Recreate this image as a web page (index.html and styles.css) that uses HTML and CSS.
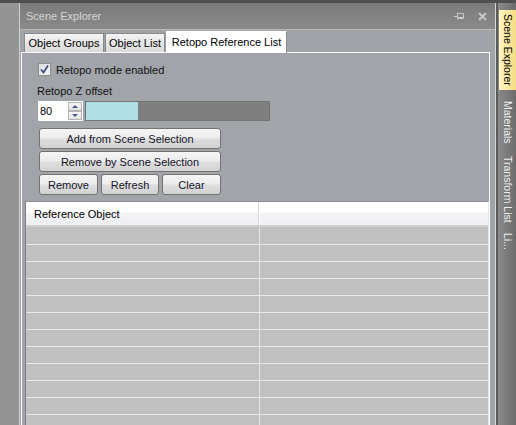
FILE: index.html
```html
<!DOCTYPE html>
<html>
<head>
<meta charset="utf-8">
<link rel="stylesheet" href="styles.css">
</head>
<body>
<div class="topbar"></div>
<div class="main">
  <div class="gutter"></div>
  <div class="panel">
    <div class="titlebar">
      <span class="title">Scene Explorer</span>
      <span class="tb-icons">
        <svg class="pin" width="10" height="8" viewBox="0 0 10 8"><path d="M0 4.5H3.5M3.5 0.5V7.5M3.5 1.5H9.5V6.5H3.5M3.5 5.5H9.5" fill="none" stroke="#c6c6c6" stroke-width="1"/></svg>
        <svg class="close" width="9" height="9" viewBox="0 0 9 9"><path d="M1 1L8 8M8 1L1 8" stroke="#c6c6c6" stroke-width="2"/></svg>
      </span>
    </div>
    <div class="body">
      <div class="tabs">
        <div class="tab t1">Object Groups</div>
        <div class="tab t2">Object List</div>
        <div class="tab active t3">Retopo Reference List</div>
      </div>
      <div class="page">
        <div class="controls">
          <div class="check">
            <span class="box"><svg width="11" height="11" viewBox="0 0 11 11"><path d="M2 5.5L4.5 8.5L9 1.5" fill="none" stroke="#3d4c7c" stroke-width="1.7"/></svg></span>
            <span>Retopo mode enabled</span>
          </div>
          <div class="field-label">Retopo Z offset</div>
          <div class="offset-row">
            <div class="num">
              <span class="num-val">80</span>
              <div class="spin">
                <div class="spin-btn"><span class="arr up"></span></div>
                <div class="spin-btn"><span class="arr down"></span></div>
              </div>
            </div>
            <div class="slider"><div class="fill" style="width:52px"></div></div>
          </div>
          <div class="buttons">
            <button class="btn wide">Add from Scene Selection</button>
            <button class="btn wide">Remove by Scene Selection</button>
            <div class="btn-row">
              <button class="btn b1">Remove</button>
              <button class="btn b2">Refresh</button>
              <button class="btn b3">Clear</button>
            </div>
          </div>
        </div>
        <div class="grid">
          <div class="grid-head">
            <div class="hcell c1">Reference Object</div>
            <div class="hcell c2"></div>
          </div>
          <div class="row"><div class="cell c1"></div><div class="cell c2"></div></div>
          <div class="row"><div class="cell c1"></div><div class="cell c2"></div></div>
          <div class="row"><div class="cell c1"></div><div class="cell c2"></div></div>
          <div class="row"><div class="cell c1"></div><div class="cell c2"></div></div>
          <div class="row"><div class="cell c1"></div><div class="cell c2"></div></div>
          <div class="row"><div class="cell c1"></div><div class="cell c2"></div></div>
          <div class="row"><div class="cell c1"></div><div class="cell c2"></div></div>
          <div class="row"><div class="cell c1"></div><div class="cell c2"></div></div>
          <div class="row"><div class="cell c1"></div><div class="cell c2"></div></div>
          <div class="row"><div class="cell c1"></div><div class="cell c2"></div></div>
          <div class="row"><div class="cell c1"></div><div class="cell c2"></div></div>
          <div class="row"><div class="cell c1"></div><div class="cell c2"></div></div>
        </div>
      </div>
    </div>
  </div>
  <div class="sep"></div>
  <div class="strip">
    <div class="vtab v1 current">Scene Explorer</div>
    <div class="vtab v2">Materials</div>
    <div class="vtab v3">Transform List</div>
    <div class="vtab v4">Li...</div>
  </div>
</div>
</body>
</html>
```

FILE: styles.css
```css
* { box-sizing: border-box; }
html, body { margin: 0; padding: 0; }
body {
  width: 516px;
  height: 425px;
  overflow: hidden;
  background: #939393;
  font-family: "Liberation Sans", Arial, sans-serif;
  font-size: 11px;
  color: #000;
}
.topbar { height: 3px; background: #4f4f4f; }
.main { display: flex; height: 422px; }
.gutter { width: 19px; background: #949494; flex: none; }
.panel {
  width: 477px;
  flex: none;
  border-left: 1px solid #cfcfcf;
  border-right: 1px solid #d8d8d8;
  display: flex;
  flex-direction: column;
  background: #a0a3a8;
}
.titlebar {
  height: 27px;
  flex: none;
  border-bottom: 1px solid #b9b9b9;
  background: linear-gradient(#7a7a7a, #8a8a8a);
  display: flex;
  align-items: center;
  padding: 0 8px 0 6px;
  color: #d4d4d4;
  font-size: 11px;
}
.tb-icons { margin-left: auto; display: flex; align-items: center; gap: 14px; }
.tb-icons svg { display: block; }
.body {
  flex: 1;
  display: flex;
  flex-direction: column;
  padding: 1px 5px 0 1px;
  min-height: 0;
}
.tabs {
  display: flex;
  align-items: flex-end;
  height: 21px;
  flex: none;
  padding-left: 3px;
  gap: 1px;
  position: relative;
  z-index: 1;
}
.tab {
  height: 19px;
  border: 1px solid #8a8a8a;
  border-bottom: none;
  background: linear-gradient(#f4f4f4, #dadada);
  display: flex;
  align-items: center;
  justify-content: center;
  white-space: nowrap;
}
.t1 { width: 80px; }
.t2 { width: 60px; }
.t3 { width: 121px; }
.tab.active {
  height: 22px;
  margin-bottom: -1px;
  background: #ffffff;
  border-color: #ffffff #8c8c8c #ffffff #ffffff;
  padding-bottom: 2px;
}
.page {
  flex: 1;
  min-height: 0;
  overflow: hidden;
  border: 1px solid #ffffff;
  border-bottom: none;
  background: #a1a4a9;
  display: flex;
  flex-direction: column;
}
.controls { padding: 10px 0 0 16px; flex: none; }
.check { display: flex; align-items: center; height: 13px; gap: 5px; color: #111; }
.box {
  width: 13px; height: 13px;
  border: 1px solid #8e8f8f;
  background: linear-gradient(135deg, #dcdcdc, #f6f6f6);
  display: flex; align-items: center; justify-content: center;
}
.box svg { display: block; }
.field-label { margin-top: 9px; height: 13px; line-height: 13px; margin-left: -1px; color: #111; }
.offset-row { margin-top: 3px; display: flex; gap: 2px; height: 20px; }
.num { width: 45px; display: flex; background: #fff; }
.num-val { width: 30px; padding-left: 2px; line-height: 20px; }
.spin { width: 15px; display: flex; flex-direction: column; padding: 1px 1px 1px 0; gap: 0; }
.spin-btn {
  flex: 1;
  border: 1px solid #b4b4b4;
  background: linear-gradient(#f6f6f6, #e2e2e2);
  display: flex; align-items: center; justify-content: center;
}
.arr { width: 0; height: 0; border-left: 3px solid transparent; border-right: 3px solid transparent; }
.arr.up { border-bottom: 3px solid #4b5a80; }
.arr.down { border-top: 3px solid #4b5a80; }
.slider {
  width: 185px;
  background: #7f7f7f;
  border: 1px solid #727272;
}
.fill { height: 100%; background: #b0e0e6; }
.buttons { margin: 7px 0 0 1px; display: flex; flex-direction: column; gap: 2px; }
.btn {
  height: 21px;
  border: 1px solid #727272;
  border-radius: 3px;
  background: linear-gradient(#f5f5f5 0%, #ececec 48%, #dedede 52%, #d2d2d2 100%);
  font-family: "Liberation Sans", Arial, sans-serif;
  font-size: 11px;
  color: #141428;
  padding: 0;
  margin: 0;
}
.wide { width: 182px; }
.btn-row { display: flex; gap: 3px; }
.b1 { width: 59px; }
.b2 { width: 58px; }
.b3 { width: 59px; }
.grid {
  margin: 6px 0 0 3px;
  flex: 1;
  border-left: 1px solid #7b7b8b;
  border-top: 1px solid #8c8c96;
  border-right: 1px solid #e4e4e4;
  background: #c0c0c0;
  overflow: hidden;
}
.grid-head {
  display: flex;
  height: 25px;
  border-bottom: 2px solid #cfcfcf;
  background: linear-gradient(#ffffff 0%, #ffffff 45%, #f3f3f6 50%, #eeeff2 100%);
}
.hcell { display: flex; align-items: center; }
.hcell.c1 { width: 233px; padding-left: 8px; border-right: 1px solid #d6d6d6; }
.hcell.c2 { flex: 1; border-left: 1px solid #ffffff; }
.row { display: flex; height: 17px; border-top: 1px solid #e9e9e9; }
.row:nth-child(2) { border-top: none; }
.cell.c1 { width: 233px; }
.cell.c2 { flex: 1; border-left: 1px solid #e6e6e6; }
.sep { width: 2px; background: #5b5b5b; flex: none; }
.strip {
  width: 18px;
  flex: none;
  background: linear-gradient(to right, #8a8a8a, #6c6c6c);
  padding-top: 7px;
  display: flex;
  flex-direction: column;
  gap: 2px;
}
.vtab {
  writing-mode: vertical-rl;
  margin-left: 1px;
  width: 17px;
  display: flex;
  align-items: center;
  justify-content: center;
  color: #eeeeee;
  font-size: 10.5px;
  white-space: nowrap;
}
.v1 { height: 80px; }
.v2 { height: 60px; }
.v3 { height: 71px; }
.v4 { height: 28px; }
.vtab.current {
  background: linear-gradient(to right, #fff6c4, #f6dc80);
  color: #000;
}
```
